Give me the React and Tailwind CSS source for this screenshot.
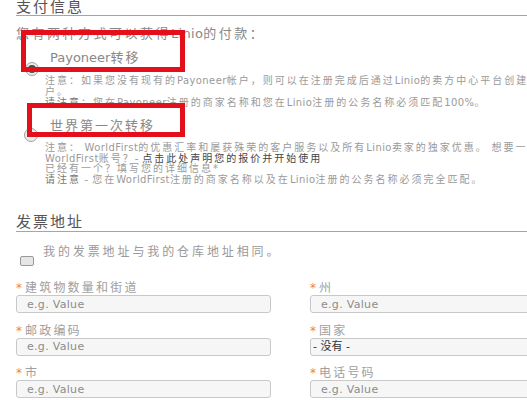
import clsx from 'clsx'

const ASCII = /^[\u0000-\u007F]+$/

// CJK runs keep the parent's letter spacing, Latin runs get their own
function Mixed({ text, lat = 'tracking-normal' }) {
  return text
    .split(/([\u0000-\u007F]+)/)
    .filter(Boolean)
    .map((p, i) =>
      ASCII.test(p) ? (
        <span key={i} className={lat}>
          {p}
        </span>
      ) : (
        <span key={i}>{p}</span>
      ),
    )
}

function Radio({ checked, className }) {
  return (
    <span
      className={clsx(
        'flex h-[14px] w-[14px] items-center justify-center rounded-full border border-[#a0a0a0] bg-[#ececec]',
        className,
      )}
    >
      {checked && <span className="h-[8px] w-[8px] rounded-full bg-[#4a4a4a]" />}
    </span>
  )
}

function Field({ label, children }) {
  return (
    <div>
      <div className="h-[12px] whitespace-nowrap text-[12px] leading-[12px] tracking-[2.2px] text-[#a0a0a0]">
        <span className="mr-[3px] tracking-normal text-[#f0804f]">*</span>
        {label}
      </div>
      <div className="mt-[1px]">{children}</div>
    </div>
  )
}

function TextInput() {
  return (
    <input
      readOnly
      placeholder="e.g. Value"
      className="block h-[18px] w-full rounded-[3px] border border-[#c8c8c8] bg-[#f6f6f6] pl-[10px] text-[11px] tracking-[0.3px] outline-none placeholder:text-[#8c8c8c]"
    />
  )
}

const noteLine = 'h-[11px] whitespace-nowrap'
const noteLine2 = 'h-[10.5px] whitespace-nowrap'

export default function App() {
  return (
    <div className="relative h-[400px] w-[527px] overflow-hidden bg-white pl-[16px] text-[#888] [font-family:'DejaVu_Sans','Noto_Sans_CJK_SC',sans-serif]">
      <div className="w-[700px]">
        <h2 className="h-[16px] border-b border-[#a5a5a5] text-[15px] font-normal leading-[15px] tracking-[2px] text-[#555]">
          支付信息
        </h2>

        <div className="mt-[10px] h-[16px] whitespace-nowrap text-[13px] leading-[16px] tracking-[2.5px] text-[#888]">
          <Mixed text="您有两种方式可以获得Linio的付款：" lat="tracking-[0.3px]" />
        </div>

        {/* Payoneer */}
        <div className="mt-[8px] flex">
          <div className="w-[29px] shrink-0">
            <Radio checked className="ml-[9px] mt-[12px]" />
          </div>
          <div>
            <div className="h-[16px] whitespace-nowrap pl-[5px] text-[13px] leading-[16px] tracking-[2px] text-[#888]">
              <Mixed text="Payoneer转移" />
            </div>
            <div className="mt-[8.5px] text-[10px] leading-[11px] tracking-[2px] text-[#9a9a9a]">
              <div className={noteLine}>
                <Mixed
                  text="注意：如果您没有现有的Payoneer帐户，则可以在注册完成后通过Linio的卖方中心平台创建帐"
                  lat="tracking-[0.4px]"
                />
              </div>
              <div className={noteLine}>户。</div>
              <div className={noteLine}>
                <span className="text-[#777]">请注意</span>
                <Mixed
                  text="：您在Payoneer注册的商家名称和您在Linio注册的公务名称必须匹配100%。"
                  lat="tracking-[0.4px]"
                />
              </div>
            </div>
          </div>
        </div>

        {/* WorldFirst */}
        <div className="mt-[10.5px] flex">
          <div className="w-[29px] shrink-0">
            <Radio className="ml-[8px] mt-[10px]" />
          </div>
          <div>
            <div className="h-[16px] whitespace-nowrap pl-[5px] text-[13px] leading-[16px] tracking-[2px] text-[#888]">
              世界第一次转移
            </div>
            <div className="mt-[9px] text-[10px] leading-[10.5px] tracking-[2px] text-[#9a9a9a]">
              <div className={noteLine2}>
                <Mixed
                  text="注意： WorldFirst的优惠汇率和屡获殊荣的客户服务以及所有Linio卖家的独家优惠。 想要一个"
                  lat="tracking-[0.4px]"
                />
              </div>
              <div className={noteLine2}>
                <Mixed text="WorldFirst账号？- " lat="tracking-[0.4px]" />
                <span className="text-[#444]">点击此处声明您的报价并开始使用</span>
              </div>
              <div className={noteLine2}>已经有一个？填写您的详细信息*</div>
              <div className={noteLine2}>
                <span className="text-[#777]">请注意</span>
                <Mixed
                  text=" - 您在WorldFirst注册的商家名称以及在Linio注册的公务名称必须完全匹配。"
                  lat="tracking-[0.4px]"
                />
              </div>
            </div>
          </div>
        </div>

        <h2 className="mt-[29px] h-[18px] border-b border-[#a5a5a5] text-[15px] font-normal leading-[17px] tracking-[2px] text-[#555]">
          发票地址
        </h2>

        <div className="mt-[12px] flex items-start">
          <span className="ml-[4px] mt-[12px] h-[10px] w-[14px] shrink-0 rounded-[2px] border border-[#999] bg-[#e6e6e6]" />
          <span className="ml-[9px] h-[16px] whitespace-nowrap text-[12px] leading-[16px] tracking-[2.9px] text-[#999]">
            我的发票地址与我的仓库地址相同。
          </span>
        </div>

        <div className="mt-[16px] grid w-[549px] grid-cols-[255px_255px] gap-x-[39px] gap-y-[11.5px]">
          <Field label="建筑物数量和街道">
            <TextInput />
          </Field>
          <Field label="州">
            <TextInput />
          </Field>
          <Field label="邮政编码">
            <TextInput />
          </Field>
          <Field label="国家">
            <div className="h-[18px] rounded-[3px] border border-[#c8c8c8] bg-[#f6f6f6] pl-[2px] text-[11px] leading-[16px] text-[#333]">
              - 没有 -
            </div>
          </Field>
          <Field label="市">
            <TextInput />
          </Field>
          <Field label="电话号码">
            <TextInput />
          </Field>
        </div>
      </div>

      {/* annotation boxes drawn over the page */}
      <div className="absolute left-[21px] top-[30px] h-[42px] w-[164px] border-[5px] border-[#e3101b]" />
      <div className="absolute left-[27px] top-[103px] h-[34px] w-[158px] border-[5px] border-[#e3101b]" />
    </div>
  )
}
